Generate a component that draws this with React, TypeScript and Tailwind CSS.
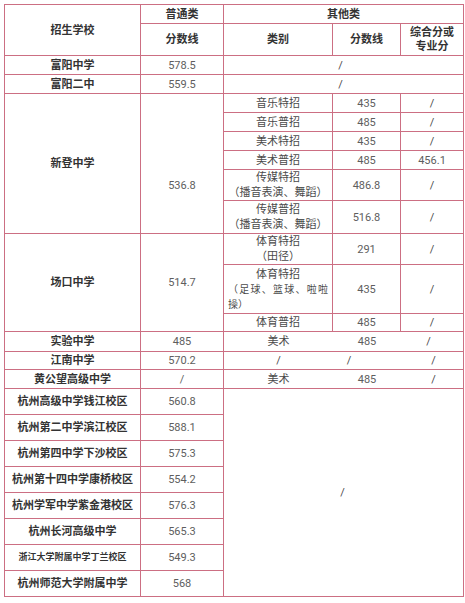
import React from "react";

const B = "border border-[#cc6f83] p-0 text-center align-middle";
const S = B + " font-bold text-[#333333]";
const N = B + " text-[#5e5e5e]";
const C = B + " text-[#4a4a4a]";

const others = [
  ["杭州高级中学钱江校区", "560.8"],
  ["杭州第二中学滨江校区", "588.1"],
  ["杭州第四中学下沙校区", "575.3"],
  ["杭州第十四中学康桥校区", "554.2"],
  ["杭州学军中学紫金港校区", "576.3"],
  ["杭州长河高级中学", "565.3"],
  ["浙江大学附属中学丁兰校区", "549.3"],
  ["杭州师范大学附属中学", "568"],
];

export default function App() {
  return (
    <div
      className="bg-white w-[465px] h-[603px] pl-[4px] pt-[4px]"
      style={{ fontFamily: '"Roboto", "Noto Sans CJK SC", sans-serif' }}
    >
      <table className="table-fixed border-collapse w-[459px] text-[11px] leading-[15px]">
        <colgroup>
          <col className="w-[136px]" />
          <col className="w-[83px]" />
          <col className="w-[109px]" />
          <col className="w-[68px]" />
          <col className="w-[63px]" />
        </colgroup>
        <tbody>
          <tr className="h-[19px]">
            <td rowSpan={2} className={S}>招生学校</td>
            <td className={S}>普通类</td>
            <td colSpan={3} className={S}>其他类</td>
          </tr>
          <tr className="h-[32px]">
            <td className={S}>分数线</td>
            <td className={S}>类别</td>
            <td className={S}>分数线</td>
            <td className={S + " leading-[14px]"}>
              综合分或
              <br />
              专业分
            </td>
          </tr>
          <tr className="h-[19px]">
            <td className={S}>富阳中学</td>
            <td className={N}>578.5</td>
            <td colSpan={3} className={C}>
              <span className="pr-[6px]">/</span>
            </td>
          </tr>
          <tr className="h-[19px]">
            <td className={S}>富阳二中</td>
            <td className={N}>559.5</td>
            <td colSpan={3} className={C}>
              <span className="pr-[6px]">/</span>
            </td>
          </tr>
          <tr className="h-[19px]">
            <td rowSpan={6} className={S}>新登中学</td>
            <td rowSpan={6} className={N + " pt-[44px]"}>536.8</td>
            <td className={C}>音乐特招</td>
            <td className={N}>435</td>
            <td className={C}>/</td>
          </tr>
          <tr className="h-[19px]">
            <td className={C}>音乐普招</td>
            <td className={N}>485</td>
            <td className={C}>/</td>
          </tr>
          <tr className="h-[19px]">
            <td className={C}>美术特招</td>
            <td className={N}>435</td>
            <td className={C}>/</td>
          </tr>
          <tr className="h-[19px]">
            <td className={C}>美术普招</td>
            <td className={N}>485</td>
            <td className={N}>456.1</td>
          </tr>
          <tr className="h-[31px]">
            <td className={C}>
              传媒特招
              <br />
              （播音表演、舞蹈）
            </td>
            <td className={N}>486.8</td>
            <td className={C}>/</td>
          </tr>
          <tr className="h-[33px]">
            <td className={C}>
              传媒普招
              <br />
              （播音表演、舞蹈）
            </td>
            <td className={N}>516.8</td>
            <td className={C}>/</td>
          </tr>
          <tr className="h-[31px]">
            <td rowSpan={3} className={S}>场口中学</td>
            <td rowSpan={3} className={N}>514.7</td>
            <td className={C}>
              体育特招
              <br />
              （田径）
            </td>
            <td className={N}>291</td>
            <td className={C}>/</td>
          </tr>
          <tr className="h-[49px]">
            <td className={C + " px-[4px] text-left"}>
              <div className="text-center">体育特招</div>
              <div className="flex justify-between text-[10px]">
                {["（", "足", "球", "、", "篮", "球", "、", "啦", "啦"].map((c, i) => (
                  <span key={i}>{c}</span>
                ))}
              </div>
              <div className="text-[10px]">操）</div>
            </td>
            <td className={N}>435</td>
            <td className={C}>/</td>
          </tr>
          <tr className="h-[18px]">
            <td className={C}>体育普招</td>
            <td className={N}>485</td>
            <td className={C}>/</td>
          </tr>
          <tr className="h-[20px]">
            <td className={S}>实验中学</td>
            <td className={N}>485</td>
            <td colSpan={3} className={C}>
              <div className="grid grid-cols-[109px_68px_63px]">
                <span>美术</span>
                <span className="text-[#5e5e5e]">485</span>
                <span className="pr-[8px]">/</span>
              </div>
            </td>
          </tr>
          <tr className="h-[18px]">
            <td className={S}>江南中学</td>
            <td className={N}>570.2</td>
            <td colSpan={3} className={C}>
              <div className="grid grid-cols-[109px_68px_63px]">
                <span>/</span>
                <span className="pr-[36px]">/</span>
                <span className="pl-[2px]">/</span>
              </div>
            </td>
          </tr>
          <tr className="h-[19px]">
            <td className={S}>黄公望高级中学</td>
            <td className={N}>/</td>
            <td colSpan={3} className={C}>
              <div className="grid grid-cols-[109px_68px_63px]">
                <span>美术</span>
                <span className="text-[#5e5e5e]">485</span>
                <span className="pl-[2px]">/</span>
              </div>
            </td>
          </tr>
          {others.map(([name, score], i) => (
            <tr key={name} className="h-[26px]">
              <td className={S + (name.length >= 12 ? " text-[9px]" : "")}>
                {name}
              </td>
              <td className={N}>{score}</td>
              {i === 0 && (
                <td rowSpan={8} colSpan={3} className={C}>
                  <span className="pr-[2px]">/</span>
                </td>
              )}
            </tr>
          ))}
        </tbody>
      </table>
    </div>
  );
}
